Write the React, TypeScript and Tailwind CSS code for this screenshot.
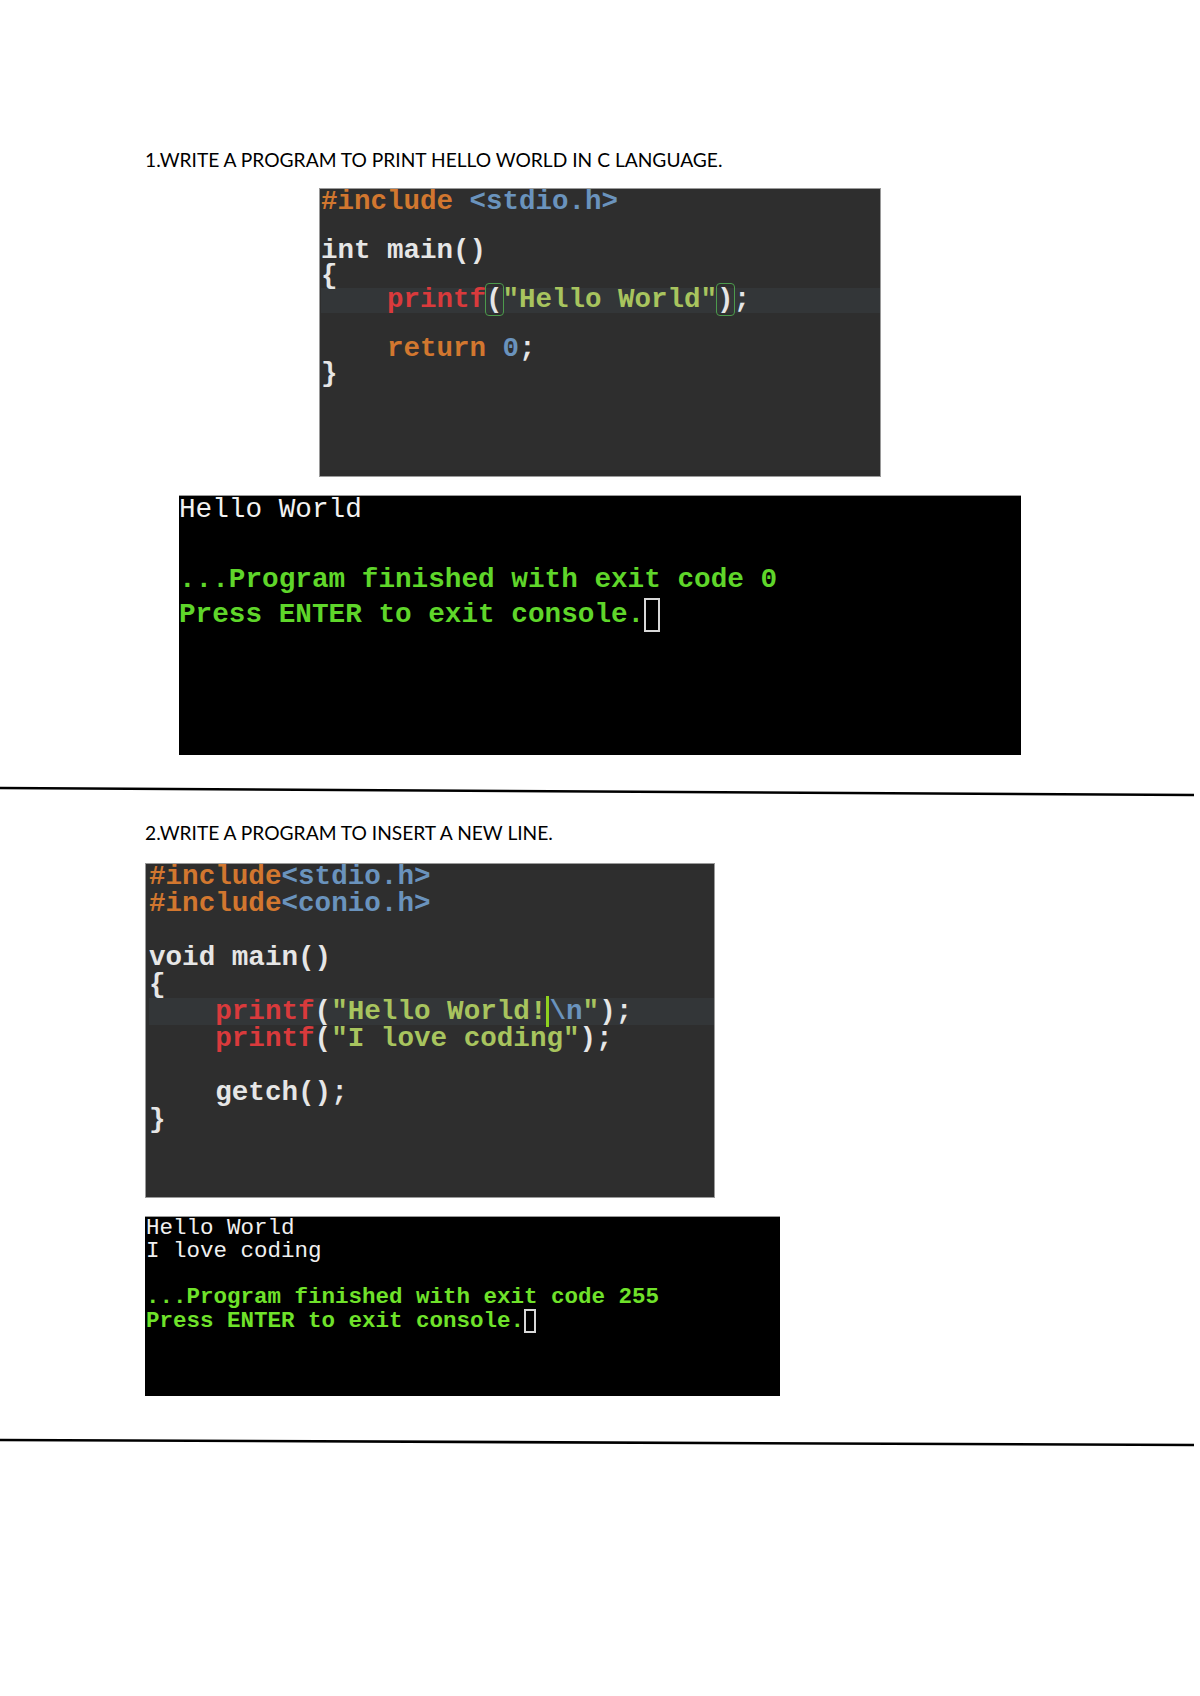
const mono = "font-['DejaVu_Sans_Mono','Liberation_Mono',monospace]";
const term = "font-['Liberation_Mono','Courier_New',monospace]";
const heading = "font-['Lato','Noto_Sans',sans-serif] text-[19.2px] leading-[24px] text-black";

function Rule({ y0, y1 }: { y0: number; y1: number }) {
  return (
    <svg width="1200" height="12" viewBox="0 0 1200 12" className="block">
      <line x1="0" y1={y0} x2="1194" y2={y1} stroke="#000" strokeWidth="2.6" />
    </svg>
  );
}

function Match({ children }: { children: string }) {
  return <span className="rounded-[3px] outline outline-1 outline-[#4c9a4c] text-[#e6e6e6]">{children}</span>;
}

function CodeOne() {
  return (
    <div className={`ml-[319px] mt-[16px] h-[289px] w-[562px] border border-[#9a9a9a] bg-[#2e2e2e] ${mono} text-[27.5px] font-bold leading-[24.5px] text-[#e6e6e6]`}>
      <pre className="pl-[1px] pt-[1px]">
        <div>
          <span className="text-[#d2772f]">#include</span> <span className="text-[#6a93bd]">&lt;stdio.h&gt;</span>
        </div>
        <div>&nbsp;</div>
        <div>int main()</div>
        <div>{"{"}</div>
        <div className="bg-[#333638]">
          {"    "}
          <span className="text-[#d93a3c]">printf</span>
          <Match>(</Match>
          <span className="text-[#a8c45e]">"Hello World"</span>
          <Match>)</Match>;
        </div>
        <div>&nbsp;</div>
        <div>
          {"    "}
          <span className="text-[#d2772f]">return</span> <span className="text-[#6a93bd]">0</span>;
        </div>
        <div>{"}"}</div>
      </pre>
    </div>
  );
}

function CodeTwo() {
  return (
    <div className={`ml-[145px] mt-[18px] h-[335px] w-[570px] border border-[#9a9a9a] bg-[#2e2e2e] ${mono} text-[27.6px] font-bold leading-[27px] text-[#e6e6e6]`}>
      <pre className="pl-[3px] -mt-[1px]">
        <div>
          <span className="text-[#d2772f]">#include</span>
          <span className="text-[#6a93bd]">&lt;stdio.h&gt;</span>
        </div>
        <div>
          <span className="text-[#d2772f]">#include</span>
          <span className="text-[#6a93bd]">&lt;conio.h&gt;</span>
        </div>
        <div>&nbsp;</div>
        <div>void main()</div>
        <div>{"{"}</div>
        <div className="bg-[#333638]">
          {"    "}
          <span className="text-[#d93a3c]">printf</span>(
          <span className="text-[#a8c45e]">"Hello World!</span>
          <span className="border-l-[3px] border-[#8fd21e] text-[#6a93bd]">\n</span>
          <span className="text-[#a8c45e]">"</span>);
        </div>
        <div>
          {"    "}
          <span className="text-[#d93a3c]">printf</span>(<span className="text-[#a8c45e]">"I love coding"</span>);
        </div>
        <div>&nbsp;</div>
        <div>{"    "}getch();</div>
        <div>{"}"}</div>
      </pre>
    </div>
  );
}

function Cursor({ w, h }: { w: string; h: string }) {
  return <span className={`inline-block align-middle border-2 border-[#d8d8d8] ${w} ${h}`} />;
}

export default function App() {
  return (
    <div className="h-[1696px] w-[1200px] overflow-hidden bg-white">
      <div className={`pl-[145px] pt-[148px] ${heading}`}>1.WRITE A PROGRAM TO PRINT HELLO WORLD IN C LANGUAGE.</div>

      <CodeOne />

      <div className={`ml-[179px] mt-[18px] h-[260px] w-[842px] overflow-hidden border-t border-[#9a9a9a] bg-black ${term} text-[27.7px] leading-[35px]`}>
        <div className="-mt-[4px]">
          <div className="text-[#f2f2f2]">Hello World</div>
          <div>&nbsp;</div>
          <div className="font-bold text-[#5fd62a]">...Program finished with exit code 0</div>
          <div className="flex items-center font-bold text-[#5fd62a]">
            <span className="whitespace-pre">Press ENTER to exit console.</span>
            <Cursor w="w-[16px]" h="h-[34px]" />
          </div>
        </div>
      </div>

      <div className="mt-[31px]">
        <Rule y0={2} y1={9} />
      </div>

      <div className={`pl-[145px] pt-[23px] ${heading}`}>2.WRITE A PROGRAM TO INSERT A NEW LINE.</div>

      <CodeTwo />

      <div className={`ml-[145px] mt-[18px] h-[180px] w-[635px] overflow-hidden border-t border-[#9a9a9a] bg-black ${term} text-[22.5px] leading-[23px]`}>
        <div className="pl-[1px] text-[#f0f0f0]">Hello World</div>
        <div className="pl-[1px] text-[#f0f0f0]">I love coding</div>
        <div>&nbsp;</div>
        <div className="pl-[1px] font-bold text-[#6fe22a]">...Program finished with exit code 255</div>
        <div className="flex items-center pl-[1px] font-bold text-[#6fe22a]">
          <span className="whitespace-pre">Press ENTER to exit console.</span>
          <Cursor w="w-[12px]" h="h-[24px]" />
        </div>
      </div>

      <div className="mt-[42px]">
        <Rule y0={2} y1={7} />
      </div>
    </div>
  );
}
